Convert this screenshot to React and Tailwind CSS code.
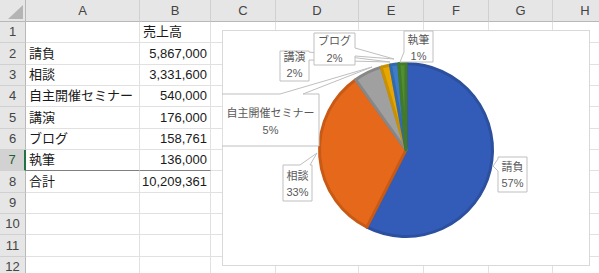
import React from 'react';

const cols = ['A', 'B', 'C', 'D', 'E', 'F', 'G', 'H'];

const rows = [
  ['', '売上高'],
  ['請負', '5,867,000'],
  ['相談', '3,331,600'],
  ['自主開催セミナー', '540,000'],
  ['講演', '176,000'],
  ['ブログ', '158,761'],
  ['執筆', '136,000'],
  ['合計', '10,209,361'],
  ['', ''],
  ['', ''],
  ['', ''],
  ['', ''],
];

const values = [5867000, 3331600, 540000, 176000, 158761, 136000];

const sliceColors = [
  { fill: '#335cb9', stroke: '#2c4f9e' },
  { fill: '#e6691b', stroke: '#c85a16' },
  { fill: '#a0a0a0', stroke: '#878787' },
  { fill: '#e8a600', stroke: '#c99100' },
  { fill: '#3d7cc9', stroke: '#3369ad' },
  { fill: '#4f8f2f', stroke: '#43792a' },
];

// callout boxes in chart coordinates
const callouts = [
  { d: 'M58,21 H87 V22 L168,32 L87,30 V51 H58 Z', cx: 72.5, y1: 31, y2: 47, t1: '講演', t2: '2%' },
  { d: 'M92,3 H133 V18 L172,29 L133,26 V35 H92 Z', cx: 112.5, y1: 15, y2: 32, t1: 'ブログ', t2: '2%' },
  { d: 'M182,1 H211 V32 H178 L182,22 Z', cx: 196.5, y1: 14, y2: 30, t1: '執筆', t2: '1%' },
  { d: 'M0,64 H58 L150,37 L81,64 H97 V116 H0 Z', cx: 48.5, y1: 87, y2: 104, t1: '自主開催セミナー', t2: '5%' },
  { d: 'M61,135 H78 L95,123 L88,135 H90 V171 H61 Z', cx: 75.5, y1: 150, y2: 166, t1: '相談', t2: '33%' },
  { d: 'M276,127 H305 V162 H276 V141 L271,136 L276,129 Z', cx: 290.5, y1: 141, y2: 157, t1: '請負', t2: '57%' },
];

const slicePath = (cx, cy, r, a0, a1) => {
  const rad = (a) => (a * Math.PI) / 180;
  const x0 = cx + r * Math.sin(rad(a0));
  const y0 = cy - r * Math.cos(rad(a0));
  const x1 = cx + r * Math.sin(rad(a1));
  const y1 = cy - r * Math.cos(rad(a1));
  const large = a1 - a0 > 180 ? 1 : 0;
  return `M${cx},${cy} L${x0},${y0} A${r},${r} 0 ${large} 1 ${x1},${y1} Z`;
};

const PieChart = () => {
  const total = values.reduce((a, b) => a + b, 0);
  let angle = 0;
  const slices = values.map((v, i) => {
    const a0 = angle;
    angle += (v / total) * 360;
    return { a0, a1: angle, ...sliceColors[i] };
  });

  return (
    <div className="absolute left-[222px] top-[30px] w-[368px] h-[236px] bg-white border border-[#d9d9d9]">
      <svg width="368" height="236" className="absolute left-[-1px] top-[-1px]">
        {slices.map((s, i) => (
          <path
            key={i}
            d={slicePath(184, 120, 86.5, s.a0, s.a1)}
            fill={s.fill}
            stroke={s.stroke}
            strokeWidth="3"
            strokeLinejoin="round"
          />
        ))}
        {callouts.map((c, i) => (
          <g key={i}>
            <path d={c.d} fill="white" stroke="#bfbfbf" strokeWidth="1" />
            <text x={c.cx} y={c.y1} textAnchor="middle" fontSize="11" fill="#595959">
              {c.t1}
            </text>
            <text x={c.cx} y={c.y2} textAnchor="middle" fontSize="11" fill="#595959">
              {c.t2}
            </text>
          </g>
        ))}
      </svg>
    </div>
  );
};

export default function App() {
  return (
    <div className="relative w-[599px] h-[273px] overflow-hidden bg-white text-[13px] text-[#1a1a1a] font-['Liberation_Sans','Noto_Sans_CJK_JP',sans-serif]">
      <div className="grid grid-cols-[26px_114px_71px_65px_83px_65px_65px_64px_65px] grid-rows-[22px_repeat(12,21.33px)]">
        {/* corner */}
        <div className="relative bg-[#e6e6e6] border-r border-b border-[#b8b8b8]">
          <svg width="26" height="22" className="absolute left-0 top-0">
            <polygon points="8,19 23,19 23,5" fill="#b4b4b4" />
          </svg>
        </div>
        {cols.map((c) => (
          <div
            key={c}
            className="flex items-center justify-center bg-[#e6e6e6] border-r border-r-[#d0d0d0] border-b border-b-[#b8b8b8] text-[#444]"
          >
            {c}
          </div>
        ))}

        {rows.map((r, i) => (
          <React.Fragment key={i}>
            <div
              className={
                i === 6
                  ? 'flex items-center justify-center bg-[#d2d2d2] text-[#1f5f33] border-r-2 border-r-[#217346] border-b border-b-[#d0d0d0]'
                  : 'flex items-center justify-center bg-[#e6e6e6] text-[#444] border-r border-r-[#b8b8b8] border-b border-b-[#d0d0d0]'
              }
            >
              {i + 1}
            </div>
            <div
              className={
                i === 6
                  ? 'flex items-center px-[3px] whitespace-nowrap border-r border-r-[#e1e1e1] border-b border-b-[#808080]'
                  : 'flex items-center px-[3px] whitespace-nowrap border-r border-b border-[#e1e1e1]'
              }
            >
              {r[0]}
            </div>
            <div
              className={
                i === 0
                  ? 'flex items-center justify-start px-[3px] whitespace-nowrap border-r border-b border-[#e1e1e1]'
                  : i === 6
                  ? 'flex items-center justify-end pr-[3px] whitespace-nowrap border-r border-r-[#e1e1e1] border-b border-b-[#808080]'
                  : 'flex items-center justify-end pr-[3px] whitespace-nowrap border-r border-b border-[#e1e1e1]'
              }
            >
              {r[1]}
            </div>
            {cols.slice(2).map((c) => (
              <div key={c} className="border-r border-b border-[#e1e1e1]" />
            ))}
          </React.Fragment>
        ))}
      </div>

      <PieChart />
    </div>
  );
}
